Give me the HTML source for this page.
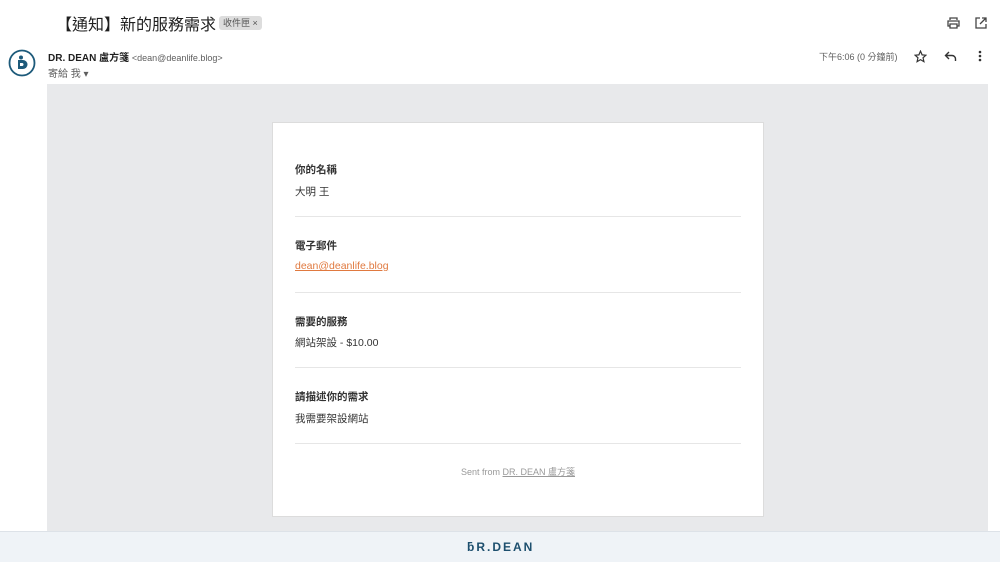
<!DOCTYPE html>
<html><head><meta charset="utf-8"><style>
*{margin:0;padding:0;box-sizing:border-box}
body{width:1000px;height:562px;background:#fff;font-family:"Liberation Sans","Noto Sans CJK TC",sans-serif;position:relative;overflow:hidden;color:#222}
.abs{position:absolute}
.title{left:56px;top:11px;font-size:16px;color:#1f1f1f;white-space:nowrap}
.tag{left:219px;top:16px;background:#ddd;border-radius:3px;font-size:9px;color:#555;padding:1px 4px;height:14px;line-height:12px}
.from{left:48px;top:49px;font-size:10px;white-space:nowrap}
.from b{color:#1f1f1f}
.from span{color:#5e5e5e;font-size:9px}
.to{left:48px;top:65px;font-size:10px;color:#5e5e5e}
.gray{left:47px;top:84px;width:941px;height:447px;background:#e8e9eb}
.card{left:272px;top:122px;width:492px;height:395px;background:#fff;border:1px solid #dcdcdc}
.lbl{font-size:10.5px;font-weight:bold;color:#333}
.val{font-size:10.5px;color:#333}
.hr{left:22px;width:446px;height:1px;background:#e6e6e6}
.foot{left:0;top:531px;width:1000px;height:31px;background:#eff3f7;border-top:1px solid #dde2e8}
</style></head><body>
<div class="abs title">【通知】新的服務需求</div>
<div class="abs tag">收件匣 ×</div>
<svg class="abs" style="left:947px;top:17px" width="13" height="12" viewBox="0 0 13 12"><path d="M3 3V1h7v2M1 4h11v5h-2v2H3V9H1z M3 7h7v4H3z" fill="none" stroke="#444" stroke-width="1.3"/></svg>
<svg class="abs" style="left:975px;top:17px" width="12" height="12" viewBox="0 0 12 12"><path d="M5 1H1v10h10V7M7 1h4v4M11 1L5 7" fill="none" stroke="#444" stroke-width="1.3"/></svg>
<svg class="abs" style="left:8px;top:49px" width="28" height="28" viewBox="0 0 28 28"><circle cx="14" cy="14" r="12.5" fill="#fff" stroke="#1d5a7a" stroke-width="1.8"/><path d="M10 11h5a4 4 0 010 9h-5z" fill="#1d5a7a"/><path d="M12 14h2.5a1.6 1.6 0 010 3H12z" fill="#fff"/><circle cx="13" cy="8.5" r="2" fill="#1d5a7a"/></svg>
<div class="abs from"><b>DR. DEAN 盧方箋</b> <span>&lt;dean@deanlife.blog&gt;</span></div>
<div class="abs to">寄給 我 ▾</div>
<div class="abs" style="left:819px;top:50px;font-size:9px;color:#5e5e5e">下午6:06 (0 分鐘前)</div>
<svg class="abs" style="left:914px;top:50px" width="13" height="13" viewBox="0 0 24 24"><path d="M12 2l3 7 7 .6-5.3 4.7 1.6 7.2L12 17.8 5.7 21.5l1.6-7.2L2 9.6 9 9z" fill="none" stroke="#333" stroke-width="2.2"/></svg>
<svg class="abs" style="left:944px;top:50px" width="13" height="12" viewBox="0 0 13 12"><path d="M5 2L1.5 5.5 5 9M1.5 5.5H8a3.5 3.5 0 013.5 3.5v2" fill="none" stroke="#333" stroke-width="1.4"/></svg>
<svg class="abs" style="left:978px;top:50px" width="4" height="12" viewBox="0 0 4 12"><circle cx="2" cy="2" r="1.3" fill="#333"/><circle cx="2" cy="6" r="1.3" fill="#333"/><circle cx="2" cy="10" r="1.3" fill="#333"/></svg>
<div class="abs gray"></div>
<div class="abs card">
 <div class="abs lbl" style="left:22px;top:39px">你的名稱</div>
 <div class="abs val" style="left:22px;top:61px">大明 王</div>
 <div class="abs hr" style="top:93px"></div>
 <div class="abs lbl" style="left:22px;top:115px">電子郵件</div>
 <div class="abs val" style="left:22px;top:137px;color:#e0793f;text-decoration:underline">dean@deanlife.blog</div>
 <div class="abs hr" style="top:169px"></div>
 <div class="abs lbl" style="left:22px;top:191px">需要的服務</div>
 <div class="abs val" style="left:22px;top:212px">網站架設 - $10.00</div>
 <div class="abs hr" style="top:244px"></div>
 <div class="abs lbl" style="left:22px;top:266px">請描述你的需求</div>
 <div class="abs val" style="left:22px;top:288px">我需要架設網站</div>
 <div class="abs hr" style="top:320px"></div>
 <div class="abs" style="left:0;width:490px;top:342px;text-align:center;font-size:9px;color:#999">Sent from <u>DR. DEAN 盧方箋</u></div>
</div>
<div class="abs foot"></div>
<div class="abs" style="left:467px;top:540px;font-size:12px;font-weight:bold;color:#1d4f6e;letter-spacing:2px">ƃR.DEAN</div>
</body></html>
